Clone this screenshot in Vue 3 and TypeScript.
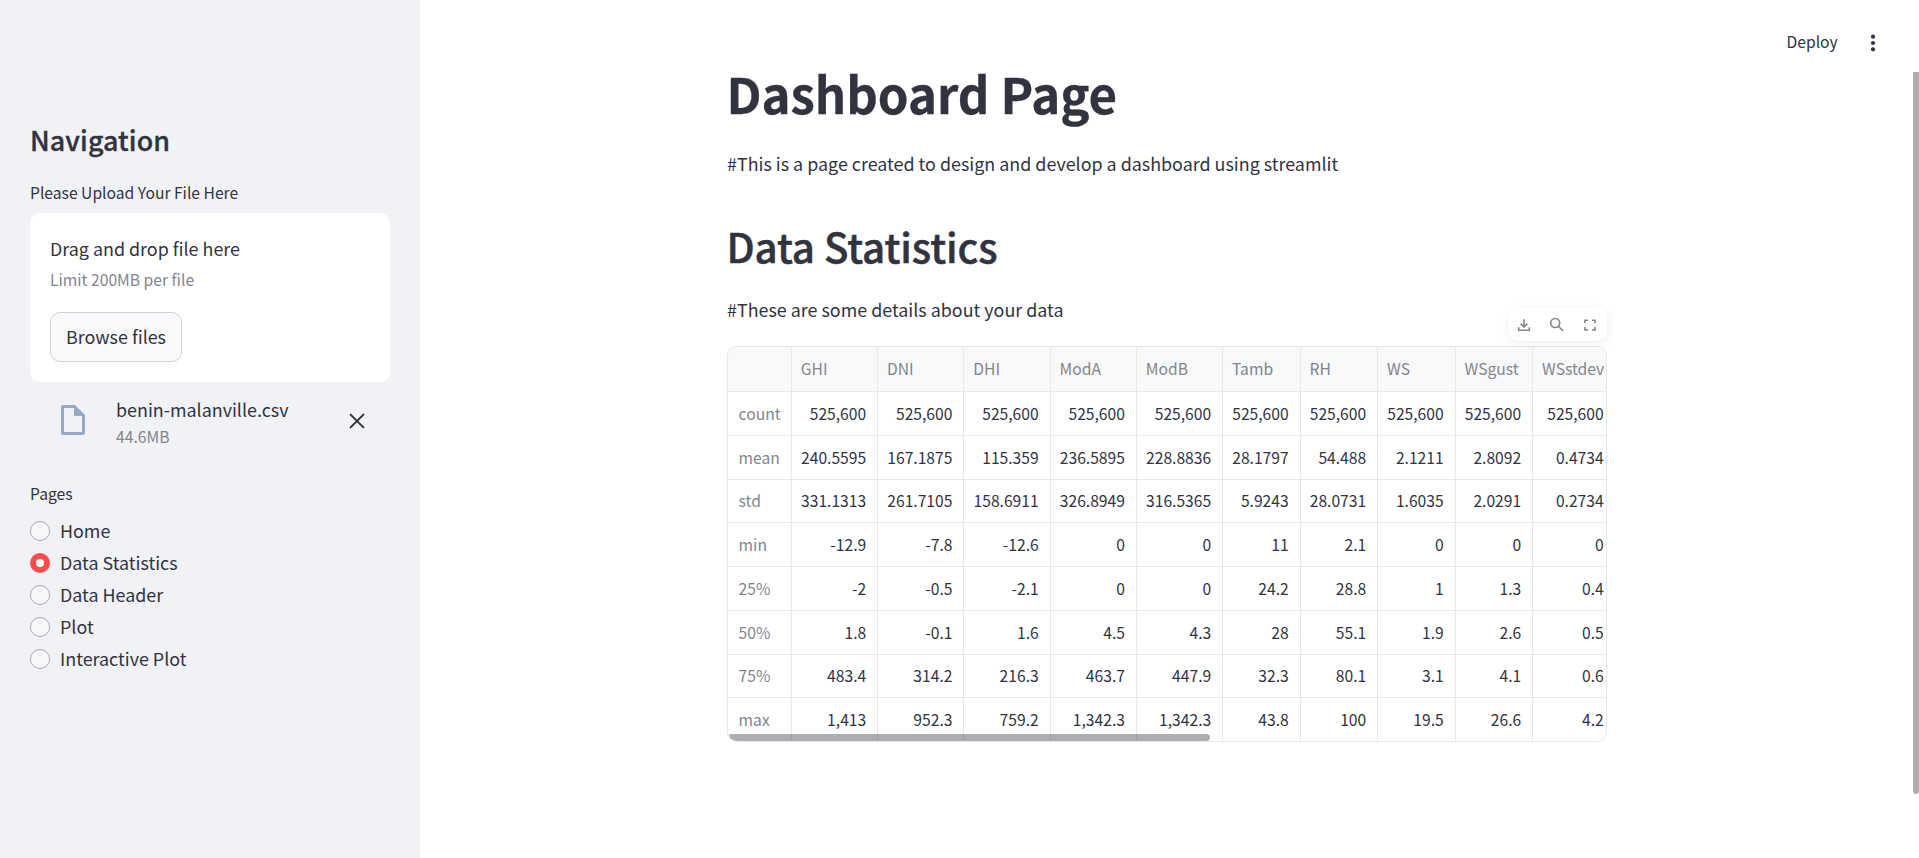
<script setup lang="ts">
import { ref } from 'vue'

interface Column {
  name: string
  width: number
}

const pages: string[] = ['Home', 'Data Statistics', 'Data Header', 'Plot', 'Interactive Plot']
const current = ref<string>('Data Statistics')

const columns: Column[] = [
  { name: '', width: 63.75 },
  { name: 'GHI', width: 86.25 },
  { name: 'DNI', width: 86.25 },
  { name: 'DHI', width: 86.25 },
  { name: 'ModA', width: 86.25 },
  { name: 'ModB', width: 86.25 },
  { name: 'Tamb', width: 77.5 },
  { name: 'RH', width: 77.5 },
  { name: 'WS', width: 77.5 },
  { name: 'WSgust', width: 77.5 },
  { name: 'WSstdev', width: 82.5 },
]

const rows: string[][] = [
  ['count', '525,600', '525,600', '525,600', '525,600', '525,600', '525,600', '525,600', '525,600', '525,600', '525,600'],
  ['mean', '240.5595', '167.1875', '115.359', '236.5895', '228.8836', '28.1797', '54.488', '2.1211', '2.8092', '0.4734'],
  ['std', '331.1313', '261.7105', '158.6911', '326.8949', '316.5365', '5.9243', '28.0731', '1.6035', '2.0291', '0.2734'],
  ['min', '-12.9', '-7.8', '-12.6', '0', '0', '11', '2.1', '0', '0', '0'],
  ['25%', '-2', '-0.5', '-2.1', '0', '0', '24.2', '28.8', '1', '1.3', '0.4'],
  ['50%', '1.8', '-0.1', '1.6', '4.5', '4.3', '28', '55.1', '1.9', '2.6', '0.5'],
  ['75%', '483.4', '314.2', '216.3', '463.7', '447.9', '32.3', '80.1', '3.1', '4.1', '0.6'],
  ['max', '1,413', '952.3', '759.2', '1,342.3', '1,342.3', '43.8', '100', '19.5', '26.6', '4.2'],
]

const template = columns.map((c) => `${c.width}px`).join(' ')
</script>

<template>
  <div class="app">
    <aside class="sidebar">
      <h2 class="nav-title">Navigation</h2>
      <div class="label">Please Upload Your File Here</div>
      <section class="dropzone">
        <div class="drop-main">Drag and drop file here</div>
        <div class="drop-sub">Limit 200MB per file</div>
        <button class="browse">Browse files</button>
      </section>
      <div class="file">
        <svg class="file-icon" viewBox="0 0 24 30">
          <path d="M2.5 0H14L24 10V27.500Q24 30 21.500 30H2.500Q0 30 0 27.500V2.500Q0 0 2.500 0ZM3 3V27H21V11H13V3Z" fill="#98a7c6" fill-rule="evenodd" />
        </svg>
        <div class="file-info">
          <div class="file-name">benin-malanville.csv</div>
          <div class="file-size">44.6MB</div>
        </div>
        <svg class="close" viewBox="0 0 16 16">
          <path d="M1.600 1.600L14.400 14.400M14.400 1.600L1.600 14.400" stroke="#31333f" stroke-width="2" stroke-linecap="round" />
        </svg>
      </div>
      <div class="label pages">Pages</div>
      <div class="radios">
        <label v-for="p in pages" :key="p" class="radio" @click="current = p">
          <span class="dot" :class="{ on: p === current }"></span>
          <span class="radio-text">{{ p }}</span>
        </label>
      </div>
    </aside>

    <main class="main">
      <header class="topbar">
        <span class="deploy">Deploy</span>
        <svg class="kebab" viewBox="0 0 6 18">
          <circle cx="3" cy="2.700" r="2.100" /><circle cx="3" cy="9" r="2.100" /><circle cx="3" cy="15.300" r="2.100" />
        </svg>
      </header>
      <div class="content">
        <h1 class="title">Dashboard Page</h1>
        <p class="para">#This is a page created to design and develop a dashboard using streamlit</p>
        <h2 class="subtitle">Data Statistics</h2>
        <p class="para second">#These are some details about your data</p>
        <div class="frame">
          <div class="tools">
            <svg viewBox="0 0 20 20"><path d="M10 4.200V11.500M6.600 8.600L10 12L13.400 8.600M4.600 12.300V15.200H15.400V12.300" /></svg>
            <svg viewBox="0 0 20 20"><circle cx="8.200" cy="8" r="4.500" /><path d="M11.500 11.300L16.100 15.900" /></svg>
            <svg viewBox="0 0 20 20"><path d="M5 8.200V5.300H8M12 5.300H15V8.200M15 12V15H12M8 15H5V12" /></svg>
          </div>
          <div class="grid">
            <div class="row head" :style="{ gridTemplateColumns: template }">
              <div v-for="c in columns" :key="c.name" class="cell">{{ c.name }}</div>
            </div>
            <div v-for="r in rows" :key="r[0]" class="row" :style="{ gridTemplateColumns: template }">
              <div v-for="(v, i) in r" :key="i" class="cell" :class="i === 0 ? 'index' : 'num'">{{ v }}</div>
            </div>
            <div class="hscroll"></div>
          </div>
        </div>
      </div>
      <div class="vscroll"></div>
    </main>
  </div>
</template>

<style>
body {
  margin: 0;
  overflow: hidden;
}
</style>

<style scoped>
.app {
  display: flex;
  height: 858px;
  background: #fff;
  color: #31333f;
  font-family: "Noto Sans CJK SC", "Noto Sans", sans-serif;
  font-size: 17.9px;
}
h1,
h2,
p {
  margin: 0;
}
.sidebar {
  box-sizing: border-box;
  width: 420px;
  flex: none;
  padding: 122px 30px 0;
  background: #f0f2f6;
}
.nav-title {
  font-size: 26.85px;
  font-weight: 500;
  line-height: 36px;
  letter-spacing: 0.1px;
  -webkit-text-stroke: 0.35px #31333f;
}
.label {
  margin-top: 22px;
  font-size: 15.67px;
  line-height: 26px;
}
.dropzone {
  box-sizing: border-box;
  height: 169px;
  margin-top: 7px;
  padding: 21px 20px 0;
  border-radius: 10px;
  background: #fff;
}
.drop-main {
  line-height: 28px;
}
.drop-sub {
  margin-top: 5px;
  font-size: 15.67px;
  line-height: 26px;
  color: #83858c;
}
.browse {
  display: block;
  box-sizing: border-box;
  width: 132px;
  height: 50px;
  margin-top: 19px;
  padding: 0 0 2px;
  border: 1px solid #d0d1d4;
  border-radius: 10px;
  background: #f9f9fb;
  color: inherit;
  font: inherit;
  line-height: 46px;
}
.file {
  display: flex;
  align-items: center;
  height: 77px;
  padding: 0 25px 0 31px;
}
.file-icon {
  width: 24px;
  height: 30px;
  padding-bottom: 1px;
}
.file-info {
  flex: 1;
  margin-left: 31px;
  padding-top: 5px;
}
.file-name {
  line-height: 27px;
}
.file-size {
  font-size: 15.67px;
  line-height: 27px;
  color: #83858c;
}
.close {
  width: 16px;
  height: 16px;
  padding-top: 1px;
}
.label.pages {
  margin-top: 22px;
}
.radios {
  margin-top: 8px;
}
.radio {
  display: flex;
  align-items: center;
  height: 32px;
}
.dot {
  box-sizing: border-box;
  width: 20px;
  height: 20px;
  border: 1px solid #a8a9af;
  border-radius: 50%;
  background: #f9f9fb;
}
.dot.on {
  border: 6px solid #ff4b4b;
  background: #fff;
}
.radio-text {
  margin-left: 10px;
  padding-bottom: 2px;
  line-height: 28px;
}
.main {
  position: relative;
  flex: 1;
}
.topbar {
  display: flex;
  justify-content: flex-end;
  align-items: center;
  height: 84px;
  padding-right: 43.5px;
}
.deploy {
  font-size: 15.67px;
  line-height: 26px;
}
.kebab {
  width: 6px;
  height: 18px;
  margin-left: 31.8px;
  padding-top: 1px;
  fill: #31333f;
}
.content {
  width: 880px;
  margin: -21px 0 0 307px;
}
.title {
  margin-left: -0.6px;
  font-size: 49.2px;
  font-weight: 700;
  line-height: 60px;
  letter-spacing: -0.05px;
  -webkit-text-stroke: 0.3px #31333f;
}
.para {
  margin-top: 25px;
  line-height: 30px;
}
.subtitle {
  margin-top: 41px;
  margin-left: -0.5px;
  font-size: 40.3px;
  font-weight: 500;
  line-height: 54px;
  letter-spacing: -0.1px;
  -webkit-text-stroke: 0.5px #31333f;
}
.para.second {
  margin-top: 21px;
}
.frame {
  position: relative;
  margin-top: 22px;
}
.tools {
  position: absolute;
  right: 0;
  top: -38px;
  z-index: 1;
  display: flex;
  box-sizing: border-box;
  width: 99px;
  height: 33px;
  padding: 0 7px 0 6px;
  align-items: center;
  justify-content: space-between;
  border-radius: 10px;
  background: #fff;
  box-shadow: 1px 2px 10px rgba(0, 0, 0, 0.07);
}
.tools svg {
  width: 20px;
  height: 20px;
  fill: none;
  stroke: #83858c;
  stroke-width: 1.6;
}
.grid {
  position: relative;
  box-sizing: border-box;
  width: 880px;
  height: 396px;
  overflow: hidden;
  border: 1px solid #e6e7e9;
  border-radius: 10px;
}
.row {
  display: grid;
  height: 43.75px;
  font-size: 15.67px;
  line-height: 43px;
}
.cell {
  box-sizing: border-box;
  padding: 0 10.8px 0 9px;
  border-right: 1px solid #e8e8ea;
  border-bottom: 1px solid #e8e8ea;
  white-space: nowrap;
}
.cell:last-child {
  border-right-color: transparent;
}
.head {
  height: 44.9px;
  background: #f8f9fb;
  color: #83858c;
  line-height: 44px;
}
.cell.index {
  padding-left: 10.6px;
  color: #83858c;
}
.num {
  text-align: right;
}
.hscroll {
  position: absolute;
  left: 0;
  bottom: 0;
  width: 482px;
  height: 7px;
  border-radius: 4px;
  background: rgba(49, 51, 63, 0.4);
}
.vscroll {
  position: absolute;
  right: 0;
  top: 72px;
  width: 6px;
  height: 722px;
  border-radius: 0 0 3px 3px;
  background: #adadb2;
}
</style>
